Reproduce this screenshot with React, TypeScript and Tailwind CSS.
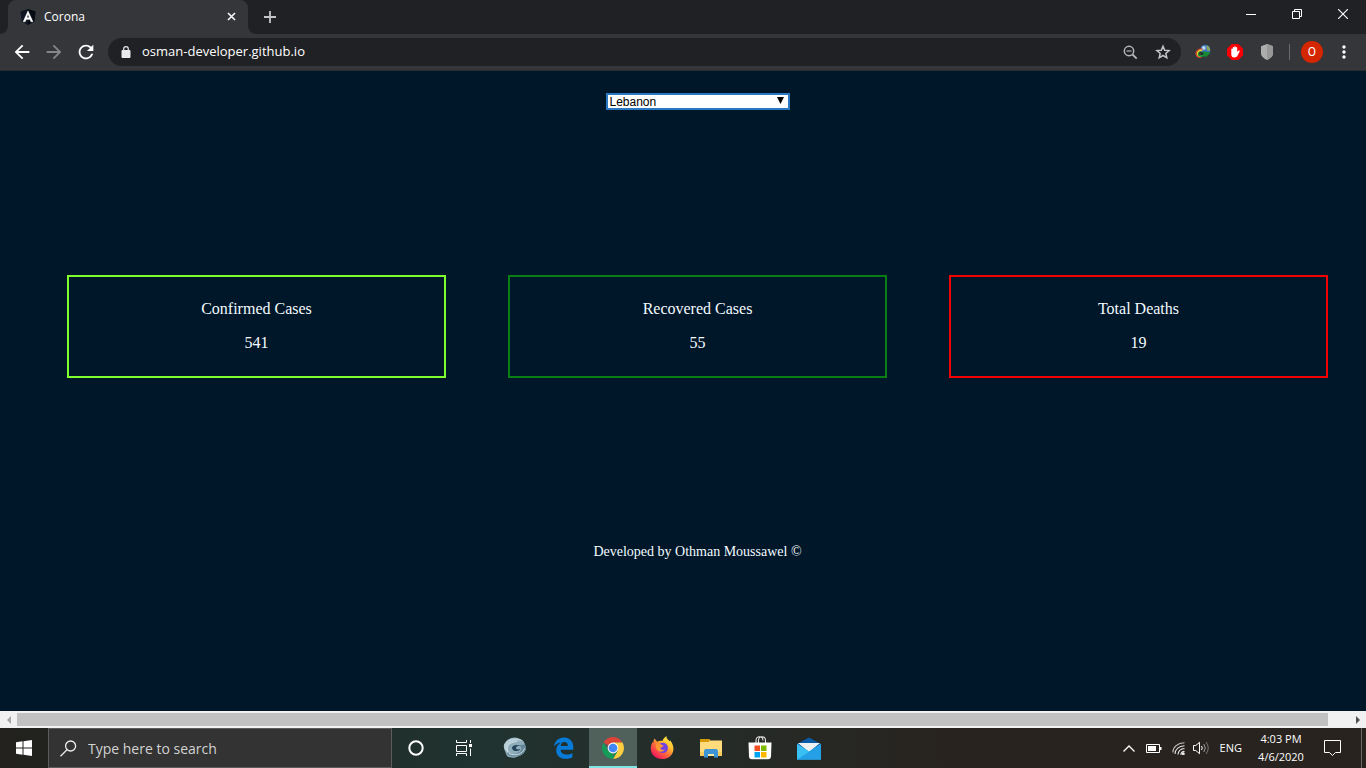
import React, { useState } from "react";
import { MdArrowBack, MdArrowForward, MdRefresh, MdMoreVert } from "react-icons/md";

const cards = [
  { title: "Confirmed Cases", value: 541, border: "border-[#7fff2e]" },
  { title: "Recovered Cases", value: 55, border: "border-[#0a7d14]" },
  { title: "Total Deaths", value: 19, border: "border-[#f40000]" },
];

function AngularIcon() {
  return (
    <svg width="16" height="16" viewBox="0 0 16 16" aria-hidden="true">
      <path d="M8 0l7.500 2.600-1.100 10L8 16l-6.400-3.400-1.100-10z" fill="#0e1420" />
      <path d="M8 0v16l6.400-3.400 1.100-10z" fill="#070b14" />
      <path d="M8 1.800L3 12.800H5.300L6.200 10.400h3.700l1 2.400h2.200zM8 5.600l1.200 3H6.900z" fill="#fff" stroke="#fff" strokeWidth=".3" />
    </svg>
  );
}

function TabStrip() {
  return (
    <header className="flex h-[34px] justify-between bg-[#202124]">
      <div className="flex items-end">
        <svg width="8" height="8" viewBox="0 0 8 8" aria-hidden="true">
          <path d="M8 0v8H0a8 8 0 0 0 8-8z" fill="#35363a" />
        </svg>
        <div className="flex h-full w-60 items-center rounded-t-lg bg-[#35363a] pl-3 pr-2.5 text-[12px] text-white">
          <AngularIcon />
          <span className="ml-2 flex-1">Corona</span>
          <button aria-label="Close tab" className="flex h-4 w-3 items-center justify-center">
            <svg width="10" height="10" viewBox="0 0 10 10" aria-hidden="true">
              <path d="M1 1l7 7M8 1L1 8" stroke="#f1f3f4" strokeWidth="1.700" />
            </svg>
          </button>
        </div>
        <svg width="8" height="8" viewBox="0 0 8 8" aria-hidden="true">
          <path d="M0 0v8h8a8 8 0 0 1-8-8z" fill="#35363a" />
        </svg>
        <button aria-label="New tab" className="flex h-full w-7 items-center justify-center">
          <svg width="12" height="12" viewBox="0 0 12 12" aria-hidden="true">
            <path d="M6 0v12M0 6h12" stroke="#c4c5c8" strokeWidth="1.800" />
          </svg>
        </button>
      </div>
      <div className="flex h-7">
        <button aria-label="Minimize" className="flex w-[46px] items-center justify-center">
          <svg width="10" height="10" viewBox="0 0 10 10" aria-hidden="true">
            <path d="M0 5.500h10" stroke="#fff" />
          </svg>
        </button>
        <button aria-label="Restore" className="flex w-[46px] items-center justify-center">
          <svg width="10" height="10" viewBox="0 0 10 10" fill="none" stroke="#fff" aria-hidden="true">
            <path d="M.5 2.500h7v7h-7zM2.500 2.500v-2h7v7h-2" />
          </svg>
        </button>
        <button aria-label="Close" className="flex w-[46px] items-center justify-center">
          <svg width="10" height="10" viewBox="0 0 10 10" aria-hidden="true">
            <path d="M0 0l10 10M10 0L0 10" stroke="#fff" strokeWidth="1.100" />
          </svg>
        </button>
      </div>
    </header>
  );
}

function DownloadIcon() {
  return (
    <svg width="16" height="16" viewBox="0 0 16 16" aria-hidden="true">
      <circle cx="10.300" cy="5.800" r="5" fill="#3b74b8" />
      <circle cx="8.800" cy="4" r="2" fill="#b4d2ee" />
      <path d="M11.500 1.200c2.500.8 4 3 3.600 5.600L12 6.500z" fill="#8aa65a" />
      <path d="M7.500 5.200C3 4.500.8 7.400 1 10c.3 2.800 3.200 3.800 5.500 3" fill="none" stroke="#d9402c" strokeWidth="1.200" />
      <path d="M7.300 6.400C4 6 2.200 8 2.400 10c.3 2 2.500 2.600 4.600 2" fill="none" stroke="#f3d531" strokeWidth="1.500" />
      <path d="M7.500 7.300c-2.500 0-3.700 1.500-3.400 3 .5 1.500 2.600 1.200 4.400.2l-1-3.200 8.300 1.200-5.400 5.300-.3-1.800c-2.500 1.400-5.700 1.500-6.900-.4-1-2.200.5-4.900 4.300-4.300z" fill="#178a34" />
      <path d="M6.300 7.800L9 9.300l-2.900 1.400z" fill="#17331c" />
    </svg>
  );
}

function AddressBar() {
  return (
    <nav className="flex h-[37px] items-center border-b border-[#2b2c2f] bg-[#35363a] pl-[11px] text-white">
      <button aria-label="Back" className="w-8"><MdArrowBack size={22} /></button>
      <button aria-label="Forward" className="w-8 text-[#85868a]"><MdArrowForward size={22} /></button>
      <button aria-label="Reload" className="w-[33px]"><MdRefresh size={22} /></button>
      <div className="flex h-7 flex-1 items-center rounded-full bg-[#202124] pl-[13px] pr-2.5">
        <svg width="10" height="12" viewBox="0 0 10 12" aria-hidden="true">
          <path d="M1 4.500h8v7H1z" fill="#e8eaed" stroke="#e8eaed" strokeLinejoin="round" />
          <path d="M2.700 4.500V3a2.300 2.300 0 0 1 4.600 0v1.500" fill="none" stroke="#e8eaed" strokeWidth="1.200" />
        </svg>
        <input
          aria-label="Address"
          defaultValue="osman-developer.github.io"
          className="ml-[11px] min-w-0 flex-1 bg-transparent text-[13px] outline-none"
        />
        <button aria-label="Zoom" className="mr-[17px]">
          <svg width="15" height="15" viewBox="0 0 15 15" fill="none" stroke="#b4b6b9" aria-hidden="true">
            <circle cx="6" cy="6" r="4.700" strokeWidth="1.500" />
            <path d="M9.500 9.500l4.200 4.200" strokeWidth="1.800" />
            <path d="M3.500 6h5" strokeWidth="1.200" />
          </svg>
        </button>
        <button aria-label="Bookmark">
          <svg width="16" height="16" viewBox="0 0 16 16" fill="none" stroke="#c2c4c7" strokeWidth="1.500" aria-hidden="true">
            <path d="M8 2.200l1.700 4 4.400.4-3.300 2.900 1 4.300L8 11.500l-3.800 2.300 1-4.300-3.300-2.900 4.400-.4z" />
          </svg>
        </button>
      </div>
      <div className="ml-3.5 flex items-center gap-4">
        <button aria-label="Download manager"><DownloadIcon /></button>
        <button aria-label="Ad blocker">
          <svg width="16" height="16" viewBox="0 0 16 16" aria-hidden="true">
            <path d="M4.700 0h6.600L16 4.700v6.600L11.300 16H4.700L0 11.300V4.700z" fill="#f90004" />
            <path d="M4.300 8.500V5.200c0-1 1.400-1 1.400 0V3.700c0-1 1.500-1 1.500 0V3c0-1 1.500-1 1.500 0v.7c0-1 1.500-1 1.500 0V8l1-1.200c.8-.8 1.900-.2 1.400.8l-2.100 4.200c-.7 1.200-1.500 1.600-2.900 1.600-2.700 0-3.300-1.600-3.300-3.200z" fill="#fff" />
          </svg>
        </button>
        <button aria-label="Privacy shield">
          <svg width="16" height="16" viewBox="0 0 16 16" aria-hidden="true">
            <path d="M8 0l6 2.200v7.300c0 2.600-2.600 4.900-6 6.500-3.400-1.600-6-3.900-6-6.500V2.200z" fill="#adadad" />
            <path d="M8 0l6 2.200v7.300c0 2.600-2.600 4.900-6 6.500z" fill="#989898" />
          </svg>
        </button>
      </div>
      <div className="ml-3.5 h-4 w-px bg-[#6a6b6e]" />
      <button className="ml-[11px] flex h-[22px] w-[22px] items-center justify-center rounded-full bg-[#d42600] font-[Roboto] text-[12px]">O</button>
      <button aria-label="Menu" className="ml-[11px] mr-3"><MdMoreVert size={20} /></button>
    </nav>
  );
}

function Dashboard() {
  const [country, setCountry] = useState("Lebanon");
  return (
    <main className="flex flex-1 flex-col bg-[#001629] pl-[67px] pr-[38px] pt-[22px] font-['Liberation_Serif',serif] text-[#f4fbff]">
      <div className="relative self-center">
        <select
          aria-label="Country"
          value={country}
          onChange={(e) => setCountry(e.target.value)}
          className="block h-[17px] w-[184px] appearance-none border-2 border-[#2a78c2] bg-white pl-0.5 font-['Liberation_Sans',sans-serif] text-[12px] leading-[14px] text-black outline-none"
        >
          <option>Lebanon</option>
        </select>
        <svg className="pointer-events-none absolute right-1.5 top-1" width="7" height="7" viewBox="0 0 7 7" aria-hidden="true">
          <path d="M0 0h7L3.500 7z" fill="#000" />
        </svg>
      </div>
      <section className="mt-[165px] grid grid-cols-3 gap-[62px] text-center text-[16px] leading-[18px]">
        {cards.map((card) => (
          <article key={card.title} className={`h-[103px] border-2 pt-[23px] ${card.border}`}>
            <h2>{card.title}</h2>
            <p className="mt-4">{card.value}</p>
          </article>
        ))}
      </section>
      <footer className="mt-[166px] text-center text-[14px] leading-4">Developed by Othman Moussawel ©</footer>
    </main>
  );
}

function ScrollBar() {
  return (
    <div className="flex h-[17px] items-center bg-[#f1f1f1]">
      <button aria-label="Scroll left" className="flex w-[17px] justify-center">
        <svg width="4" height="8" viewBox="0 0 4 8" aria-hidden="true"><path d="M4 0v8L0 4z" fill="#a3a3a3" /></svg>
      </button>
      <div className="mr-[21px] h-[13px] flex-1 bg-[#c1c1c1]" />
      <button aria-label="Scroll right" className="flex w-[17px] justify-center">
        <svg width="4" height="8" viewBox="0 0 4 8" aria-hidden="true"><path d="M0 0v8l4-4z" fill="#505050" /></svg>
      </button>
    </div>
  );
}

const apps = [
  {
    name: "Browser",
    icon: (
      <svg width="24" height="22" viewBox="0 0 24 22" fill="none" aria-hidden="true">
        <path d="M1 8C3 2 10-1 16 1.500c4 1.200 6 4 6 7 2 4-1 9-6 10.500-5 3-12 2-13-2 0-2-3-5-2-9z" fill="#8fadbb" />
        <path d="M1 8C4 1 14-1 20 4c-6-1.500-12 0-14.500 4C4 11 5 14 7 16 3 14.500.5 12 1 8z" fill="#b9d0d9" />
        <path d="M22 7c3 5-1 11-7 12-5 1.500-10 0-11.500-3 4 1.500 11 1.500 14-2 2-2.500.5-5-2-5.500 3-1 6-.8 6.500-1.500z" fill="#648799" />
        <path d="M9 11c0-3 5-4 8-2.200-2 0-4 .7-4 2.200s2.500 1.800 4.500 1c-1.500 3-8.500 2.800-8.500-1z" fill="#24465a" />
        <path d="M5 15c-3-5 1-10 9-10.500M6 16.500c6 3 14 .5 15.500-5" stroke="#d3e3e8" strokeWidth="1" />
      </svg>
    ),
  },
  {
    name: "Edge",
    icon: (
      <svg width="22" height="22" viewBox="0 0 22 22" aria-hidden="true">
        <path d="M1 9.600C1.700 4 5.500.5 11 .5c6.200 0 9.300 4.400 9.300 10v2.300H7.600c.2 3.300 2.900 4.800 6.100 4.800 2.100 0 4.100-.6 5.700-1.600v4.300c-1.900 1-4.300 1.500-6.700 1.500-5.600 0-9.500-3.400-9.500-8.400 0-3.500 1.800-6.300 4.800-8C4.500 6 2.300 7.400 1 9.600zm6.700-.7h7.200c0-2.500-1.300-3.900-3.500-3.900S7.900 6.500 7.700 8.900z" fill="#087bd8" />
      </svg>
    ),
  },
  {
    name: "Chrome",
    icon: (
      <svg width="22" height="22" viewBox="0 0 22 22" aria-hidden="true">
        <path d="M11 11L1.500 5.500A11 11 0 0 1 20.500 5.500H11z" fill="#db4437" />
        <path d="M11 5.500h9.500A11 11 0 0 1 11 22l4.800-8.300z" fill="#ffcd40" />
        <path d="M1.500 5.500l4.700 8.200 4.800 2.800L11 22A11 11 0 0 1 1.500 5.500z" fill="#159b58" />
        <path d="M15.800 13.700L11 22l-1-.1 2.700-5.700z" fill="#159b58" />
        <circle cx="11" cy="11" r="5.400" fill="#f3f5f5" />
        <circle cx="11" cy="11" r="4.300" fill="#4285f4" />
      </svg>
    ),
  },
  {
    name: "Firefox",
    icon: (
      <svg width="24" height="24" viewBox="0 0 24 24" aria-hidden="true">
        <defs>
          <linearGradient id="fx" x1=".85" y1=".05" x2=".2" y2=".9">
            <stop offset="0" stopColor="#fff04b" /><stop offset=".35" stopColor="#ffbd2e" /><stop offset=".6" stopColor="#ff7139" /><stop offset="1" stopColor="#f0195b" />
          </linearGradient>
        </defs>
        <path d="M4.500 2.500l2.700 3.200C9 4.800 10.800 4.700 12.500 5 13 3 14.500 1.600 16.300 0c.2 2.600 1.700 3.700 3.200 5.200l.8-.8c2.500 3.300 3.600 6.500 3 10-.8 5-5.500 8.600-11.200 8.600C5.500 23 .8 18.500.8 12.500c0-2.700.8-5 2-6.600l.5 1.500c0-1.800.5-3.500 1.200-4.900z" fill="url(#fx)" />
        <path d="M9.500 7.500c5-2 9.200 1 8.300 5.500-.8 3.800-5 5-8.200 3-2.600-2-2.600-4.500-.7-5.600l2.800-.6c.5-1-.8-1.800-2.200-2.300z" fill="#7141e0" />
        <path d="M6 8.500c1.700-.6 3.500-.2 4.500.8h3c-.1 1.700-2.100 2.300-3.200 2.500.2 2.300 3.200 3 4.700 1-1 3.500-6 4-8 1C6 12 5.600 10.500 6 8.500z" fill="#ff9a33" />
      </svg>
    ),
  },
  {
    name: "File Explorer",
    icon: (
      <svg width="22" height="19" viewBox="0 0 22 19" aria-hidden="true">
        <path d="M0 0h9l1.500 1.500H22V17H0z" fill="#ffdb7b" />
        <path d="M0 0h9l1 1.200L8.500 3H0z" fill="#d69a09" />
        <path d="M0 13h22v4H0z" fill="#f8cb5c" />
        <path d="M4 18.500v-7L5.500 10h11l1.500 1.500v7h-4V15H8v3.500z" fill="#3d95d7" />
        <path d="M8 15h6v2H8z" fill="#ffe9a7" />
      </svg>
    ),
  },
  {
    name: "Microsoft Store",
    icon: (
      <svg width="24" height="24" viewBox="0 0 24 24" aria-hidden="true">
        <path d="M8 8V4.500c0-5 7-5 7 0M10.500 8V4.500c0-5 7-5 7 0V8" fill="none" stroke="#e5e7e4" strokeWidth="1.100" />
        <path d="M.5 6.500h23l-.5 14.300a2.500 2.500 0 0 1-2.500 2.400h-17A2.500 2.500 0 0 1 1 20.800z" fill="#fff" />
        <path d="M6.500 9.500H12V15H6.500z" fill="#f25022" /><path d="M13 9.500h5.500V15H13z" fill="#7fba00" />
        <path d="M6.500 16H12v5.500H6.500z" fill="#00a4ef" /><path d="M13 16h5.500v5.500H13z" fill="#ffb900" />
      </svg>
    ),
  },
  {
    name: "Mail",
    icon: (
      <svg width="24" height="23" viewBox="0 0 24 23" aria-hidden="true">
        <path d="M12 .5L24 7v15.500H0V7z" fill="#0b5ca8" />
        <path d="M1 6h22L12 15z" fill="#f1f1f1" />
        <path d="M0 7l12 7.500L24 7v15.500H0z" fill="#38c0f2" />
        <path d="M24 22.500H0L24 7z" fill="#259fe5" />
        <path d="M0 7l12 7.500L14.500 13 0 22.500z" fill="#38c0f2" />
        <path d="M1.500 6h21L12 13.800z" fill="#f1f1f1" />
      </svg>
    ),
  },
];

function Taskbar() {
  return (
    <footer className="flex h-10 bg-linear-to-r from-[#22211e] via-[#203330] via-35% to-[#28231f] to-70% text-white">
      <button aria-label="Start" className="flex w-12 items-center justify-center">
        <svg width="16" height="16" viewBox="0 0 16 16" fill="#fff" aria-hidden="true">
          <path d="M0 2.200L6.500 1.300V7.500H0zM7.500 1.200L16 0v7.500H7.500zM0 8.500h6.500v6.200L0 13.800zM7.500 8.500H16V16l-8.500-1.200z" />
        </svg>
      </button>
      <label className="flex w-[344px] items-center border border-[#5c5c5c] bg-[#333333] pl-[11px]">
        <svg width="17" height="17" viewBox="0 0 17 17" fill="none" stroke="#eeeeee" strokeWidth="1.300" aria-hidden="true">
          <circle cx="10.600" cy="6" r="5" /><path d="M7 9.700L.5 16.300" />
        </svg>
        <input aria-label="Search" placeholder="Type here to search" className="ml-[11px] min-w-0 flex-1 bg-transparent text-[14px] outline-none placeholder:text-[#d2d2d2]" />
      </label>
      <button aria-label="Cortana" className="flex w-12 items-center justify-center">
        <svg width="16" height="16" viewBox="0 0 16 16" aria-hidden="true"><circle cx="8" cy="8" r="6.700" fill="none" stroke="#fff" strokeWidth="2" /></svg>
      </button>
      <button aria-label="Task View" className="mr-[3px] flex w-12 items-center justify-center">
        <svg width="16" height="16" viewBox="0 0 16 16" fill="none" stroke="#fff" aria-hidden="true">
          <path d="M.5 0v2.500h10V0M.5 5.500h10v6H.5zM.5 16v-2.500h10V16M14.500 0v3M14.500 8.500V16" /><path d="M13 4h3v3h-3z" fill="#fff" stroke="none" />
        </svg>
      </button>
      <div className="flex gap-px">
        {apps.map((app) => (
          <button
            key={app.name}
            aria-label={app.name}
            className={`flex w-12 items-center justify-center border-y-2 border-t-transparent ${app.name === "Chrome" ? "border-b-[#82e4e5] bg-[#50605a]" : "border-b-transparent"}`}
          >
            {app.icon}
          </button>
        ))}
      </div>
      <div className="ml-auto flex items-center text-[12px]">
        <button aria-label="Hidden icons">
          <svg width="12" height="7" viewBox="0 0 12 7" fill="none" stroke="#fff" strokeWidth="1.300" aria-hidden="true"><path d="M.5 6.500L6 1l5.500 5.500" /></svg>
        </button>
        <svg className="ml-[11px]" width="16" height="9" viewBox="0 0 16 9" aria-hidden="true">
          <path d="M.5.5h13v8H.5z" fill="none" stroke="#fff" /><path d="M2 2h8v5H2zM14 3h1.500v3H14z" fill="#fff" />
        </svg>
        <svg className="ml-2.5" width="13" height="13" viewBox="0 0 13 13" fill="none" stroke="#e9e9e9" strokeWidth="1.100" aria-hidden="true">
          <path d="M.8 10.500C1 5 5.500 1 12.500.8" stroke="#c4c4c4" /><path d="M3 12C3.300 7.300 7 4 12.500 3.700M6 12.500c.3-3.300 3-5.700 6.500-6" /><path d="M8.800 12.700c.2-1.700 1.700-3.200 3.700-3.300" /><circle cx="11.200" cy="11.800" r="1" fill="#fff" />
        </svg>
        <svg className="ml-2" width="17" height="14" viewBox="0 0 17 14" fill="none" stroke="#fff" aria-hidden="true">
          <path d="M.5 4.500h2.300l3.700-3.200v11.400L2.800 9.500H.5z" /><path d="M8.500 5q1.500 2 0 4" /><path d="M10.800 3q3 4 0 8" stroke="#a0a0a0" /><path d="M13 1q4.500 6 0 12" stroke="#777" />
        </svg>
        <span className="ml-2.5 text-[11px]">ENG</span>
        <div className="ml-2 w-[62px] text-center text-[11px] leading-[18px]">
          <div>4:03 PM</div>
          <div>4/6/2020</div>
        </div>
        <button aria-label="Notifications" className="ml-3">
          <svg width="17" height="16" viewBox="0 0 17 16" fill="none" stroke="#fff" aria-hidden="true"><path d="M.5.5h16v12h-5L8.500 15.500l-3-3h-5z" /></svg>
        </button>
        <div className="ml-5 mr-1 h-10 w-px bg-[#6c6864]" />
      </div>
    </footer>
  );
}

export default function App() {
  return (
    <div className="flex min-h-screen flex-col font-['Open_Sans',sans-serif]">
      <TabStrip />
      <AddressBar />
      <Dashboard />
      <ScrollBar />
      <Taskbar />
    </div>
  );
}
